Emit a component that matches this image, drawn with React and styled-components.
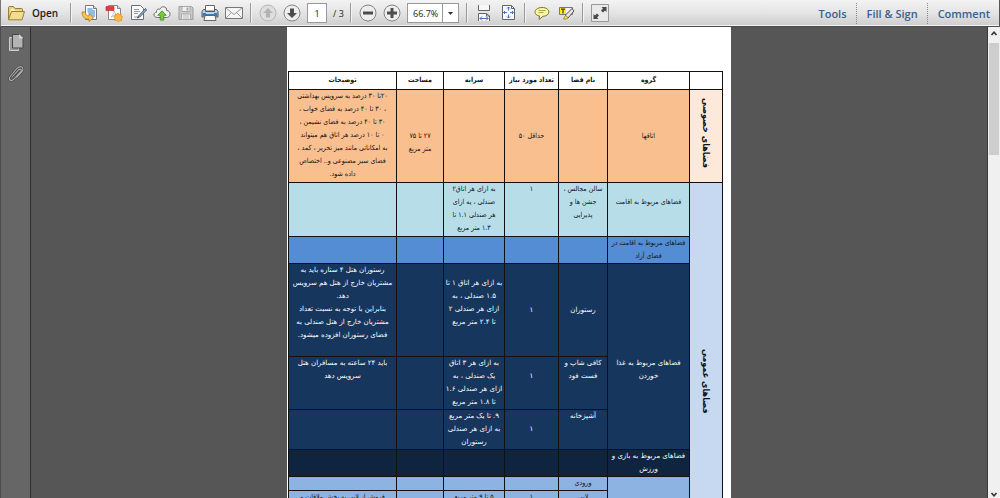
import React from "react";
import styled, { createGlobalStyle, css } from "styled-components";

const Global = createGlobalStyle`
  *, *::before, *::after { box-sizing: border-box; }
  body { margin: 0; overflow: hidden; font-family: "Open Sans", "Noto Sans", sans-serif; }
  button, input, select { font: inherit; color: inherit; }
`;

const Window = styled.div`
  display: flex;
  flex-direction: column;
  height: 100vh;
  background: #555;
`;

const Toolbar = styled.header`
  display: flex;
  align-items: center;
  flex: none;
  height: 27px;
  padding-left: 6px;
  border-left: 1px solid #777;
  border-right: 1px solid #555;
  border-bottom: 1px solid #4a4a4a;
  background: linear-gradient(#f3f3f3, #e4e4e4 50%, #cdcdcd);
  box-shadow: inset 0 -1px #f5f5f5;
`;

const Group = styled.div`
  display: flex;
  align-items: center;
  gap: 6px;
`;

const Separator = styled.span`
  width: 2px;
  height: 20px;
  margin: 0 ${(p) => (p.$wide ? 9 : 7)}px;
  border-left: 1px solid #999;
  border-right: 1px solid #f4f4f4;
`;

const IconButton = styled.button`
  display: flex;
  width: 18px;
  height: 18px;
  padding: 0;
  border: 0;
  background: none;
  svg { display: block; }
`;

const OpenButton = styled.button`
  display: flex;
  align-items: center;
  gap: 7px;
  width: 54px;
  padding: 0;
  border: 0;
  background: none;
  font-size: 10px;
  font-weight: 600;
  line-height: 18px;
  color: #1c1c1c;
  svg { flex: none; }
`;

const PageInput = styled.input`
  width: 20px;
  height: 20px;
  padding: 0;
  border: 1px solid #999;
  background: #fff;
  text-align: center;
  font-size: 9px;
  color: #222;
`;

const PageCount = styled.span`
  width: 10px;
  font-size: 9px;
  white-space: nowrap;
  color: #222;
`;

const ZoomBox = styled.label`
  position: relative;
  display: flex;
  width: 52px;
  height: 20px;
  svg { position: absolute; top: 0; right: 0; pointer-events: none; }
`;

const ZoomSelect = styled.select`
  appearance: none;
  width: 100%;
  padding: 0 18px 0 5px;
  border: 1px solid #999;
  border-radius: 0;
  background: #fff;
  font-size: 9px;
  color: #222;
`;

const Panes = styled.nav`
  display: flex;
  align-items: center;
  margin-left: auto;
`;

const PaneButton = styled.button`
  height: 21px;
  padding: 0 9px 0 10px;
  border: 0;
  border-left: ${(p) => (p.$first ? "0" : "1px dotted #888")};
  background: none;
  font-size: 11px;
  font-weight: 600;
  color: #38618f;
`;

const Workspace = styled.div`
  display: flex;
  flex: 1;
  min-height: 0;
`;

const SideRail = styled.aside`
  display: flex;
  flex-direction: column;
  align-items: center;
  gap: 13px;
  flex: none;
  width: 31px;
  padding-top: 6px;
  border-left: 1px solid #4c4c4c;
  border-right: 1px solid #2e2e2e;
  background: #666;
`;

const Viewport = styled.main`
  display: flex;
  justify-content: center;
  flex: 1;
  min-width: 0;
  overflow: hidden;
  background: #565656;
`;

const Sheet = styled.article`
  flex: none;
  align-self: flex-start;
  padding: 44px 8px 40px 1px;
  background: #fff;
`;

const ScrollTrack = styled.div`
  display: flex;
  flex-direction: column;
  align-items: center;
  flex: none;
  width: 13px;
  padding: 3px 0 0;
  border-left: 1px solid #3a3a3a;
  background: #f0f0f0;
`;

const ScrollThumb = styled.div`
  width: 10px;
  height: 112px;
  margin: 6px 0 auto;
  background: #cdcdcd;
`;

const Table = styled.table`
  border-collapse: collapse;
  table-layout: fixed;
  width: 434px;
  direction: rtl;
  font-family: "DejaVu Sans Condensed", "DejaVu Sans", sans-serif;
  font-size: 7px;
  line-height: 13px;
  color: #111;
`;

const Col = styled.col`
  width: ${(p) => p.$w}px;
`;

const tones = {
  peach: css`background: #fabf8f;`,
  cream: css`background: #fde9d9;`,
  aqua: css`background: #b7dee8;`,
  blue: css`background: #548dd4;`,
  navy: css`background: #17365d; color: #fff; font-family: "DejaVu Sans", sans-serif;`,
  ink: css`background: #0f243e; color: #fff; font-family: "DejaVu Sans", sans-serif;`,
  sky: css`background: #8db3e2;`,
  ice: css`background: #c6d9f1;`,
};

const Row = styled.tr`
  height: ${(p) => p.$h}px;
  ${(p) => tones[p.$tone]}
`;

const Head = styled.th`
  padding: 0;
  border: 1px solid #111;
  font-weight: 700;
  color: #111;
  white-space: nowrap;
`;

const Cell = styled.td`
  padding: 0;
  border: 1px solid #111;
  text-align: center;
  vertical-align: ${(p) => (p.$top ? "top" : "middle")};
  white-space: pre;
`;

const SideHead = styled.th`
  padding: 0;
  border: 1px solid #111;
  color: #111;
  ${(p) => tones[p.$tone]}
`;

const Vertical = styled.span`
  display: inline-block;
  writing-mode: vertical-rl;
  font-size: 9px;
  line-height: 16px;
  white-space: nowrap;
`;

const Svg = ({ children, w = 18, h = 18 }) => (
  <svg width={w} height={h} viewBox={`0 0 ${w} ${h}`} fill="none" aria-hidden="true">
    {children}
  </svg>
);

const FolderIcon = () => (
  <Svg>
    <path d="M1.5 15.5V3.5q0-1 1-1h4l1.5 2h6.5q1 0 1 1v2" fill="#e5cd7b" stroke="#9b7e35" />
    <path d="M4 4.5h3l1 2h6.5v3H3z" fill="#f7eeb8" />
    <path d="M1.5 15.8L4.5 7.5h13l-2.5 8.3z" fill="#f3dc8e" stroke="#9b7e35" />
  </Svg>
);
const ExportIcon = () => (
  <Svg>
    <path d="M4.5 1.5h8l3 3v11h-11z" fill="#fbfcff" stroke="#777" />
    <path d="M6.500 4h5v2h2.500v7H8V10L6.500 8z" fill="#8fbce9" />
    <path d="M12.500 1.500v3h3" stroke="#777" fill="#e8e8e8" />
    <path d="M1 8h3.500q-.5 4 3.500 4V9.500l4.500 4.300L8 17.500V15Q1 15.500 1 8z" fill="#ffc64d" stroke="#b97c1c" strokeWidth=".8" />
  </Svg>
);
const CreateIcon = () => (
  <Svg>
    <path d="M3.500 1.500h9l3 3v11h-12z" fill="#fff" stroke="#888" />
    <path d="M12.500 1.500v3h3" stroke="#888" fill="#ddd" />
    <path d="M6 13c2-2 3-4 3-6 1 3 3 4 5 4-3-.5-5 .5-8 2z" stroke="#b5b5b5" strokeWidth=".8" />
    <path d="M1 2.500h8v4H1z" fill="#e63a3f" stroke="#b71f2a" strokeWidth=".6" />
    <path d="M13 9l1.200 1.500 1.900-.5v2l1.700 1-1.400 1.400.3 2-2 .1-1.500 1.300-1.500-1.300-2-.1.300-2L8.600 13l1.700-1v-2l1.700.5z" fill="#f9b942" stroke="#d98d1e" strokeWidth=".7" />
  </Svg>
);
const EditIcon = () => (
  <Svg>
    <path d="M2.500 1.500h9l3 3v11h-12z" fill="#f8f8f8" stroke="#707070" />
    <path d="M5 5.500h5M5 7.500h6M5 9.500h4M5 13h4" stroke="#999" />
    <path d="M16.500 4.500L9.500 12 8.500 14l2.200-1L17.500 6z" fill="#9fc0df" stroke="#34495e" strokeWidth=".9" />
  </Svg>
);
const CloudIcon = () => (
  <Svg>
    <path d="M4.500 13.500C0 13.500 0 8.500 3.500 8.300 3 5 6 4.500 6.800 5.500 8 1.500 14 2 13.700 6.500c4.300 0 4.600 7-.2 7z" fill="#f2f2f2" stroke="#6b6b6b" />
    <path d="M9 6.800l4.300 4.500h-2.500v4.800H7.200v-4.800H4.700z" fill="#79cb3c" stroke="#3d8c1d" strokeWidth=".8" />
  </Svg>
);
const SaveIcon = () => (
  <Svg>
    <path d="M2 2.500h12.500l1.500 1.500v11.500H2z" fill="#c9c9c9" stroke="#9b9b9b" />
    <path d="M5 2.500h8v5H5z" fill="#f0f0f0" stroke="#aaa" />
    <path d="M9.500 3.500h2v3h-2z" fill="#aaa" />
    <path d="M4.500 10h9v5.500h-9z" fill="#ededed" stroke="#aaa" />
    <path d="M6 12h6M6 14h6" stroke="#bbb" />
  </Svg>
);
const PrintIcon = () => (
  <Svg>
    <path d="M4.500 7V1.500h9V7z" fill="#fff" stroke="#666" />
    <path d="M2.500 5.500h2v2h9v-2h2l1.500 2v5.500H1V7.500z" fill="#c0d2e2" stroke="#4c5864" />
    <path d="M1.500 9h15v3.500h-15z" fill="#3f79ae" />
    <path d="M4 11.500h10l1 5H3z" fill="#fafafa" stroke="#666" />
    <path d="M5 9.500h8" stroke="#b9d8f3" />
  </Svg>
);
const MailIcon = () => (
  <Svg>
    <path d="M.5 3.500h17v11H.5z" fill="#f5f5f5" stroke="#777" />
    <path d="M1 4l8 6.500L17 4M1 14l5.500-5.500M17 14l-5.500-5.500" stroke="#999" />
  </Svg>
);
const Disc = ({ children, dim }) => (
  <Svg>
    <circle cx="9" cy="9" r="8" fill={dim ? "#dedede" : "#eee"} stroke={dim ? "#b5b5b5" : "#858585"} />
    <g fill={dim ? "#b2b2b2" : "#4d4d4d"}>{children}</g>
  </Svg>
);
const UpIcon = () => <Disc dim><path d="M9 4l5 5h-3v4.500H7V9H4z" /></Disc>;
const DownIcon = () => <Disc><path d="M9 14l5-5h-3V4.500H7V9H4z" /></Disc>;
const MinusIcon = () => <Disc><path d="M4 7.500h10v3H4z" /></Disc>;
const PlusIcon = () => <Disc><path d="M4 7.500h3.500V4h3v3.500H14v3h-3.500V14h-3v-3.500H4z" /></Disc>;
const FitWidthIcon = () => (
  <Svg>
    <path d="M3.500 1v5.500h11V1" fill="#f8f8f8" stroke="#666" />
    <path d="M3.500 17v-7.500h8l3 2.500v5" fill="#f8f8f8" stroke="#666" />
    <path d="M11.500 9.500V12h3" stroke="#666" />
    <path d="M5 14.500h8M7 12.500l-2 2 2 2M11 12.500l2 2-2 2" stroke="#3e62b3" strokeWidth=".9" />
  </Svg>
);
const FitPageIcon = () => (
  <Svg>
    <path d="M3.500 1.500h9l3 3v11h-12z" fill="#f7f9fc" stroke="#666" />
    <path d="M12.500 1.500v3h3" stroke="#666" />
    <path d="M9.500 3v3.500M9.500 10.500V14M4.500 8.500H8M11 8.500h3.500M8 4.500L9.500 3 11 4.500M8 12.500L9.500 14l1.500-1.500M6 7L4.500 8.500 6 10M13 7l1.500 1.500L13 10" stroke="#3e62b3" strokeWidth=".9" />
  </Svg>
);
const NoteIcon = () => (
  <Svg>
    <path d="M9 3.500c9 0 9 8.500 1 8.800L6 15.500l.5-3.500C-.5 11 1 3.500 9 3.500z" fill="#fbf7a0" stroke="#77743a" />
    <path d="M5.500 6.500h7M5.500 8.500h5" stroke="#aaa555" />
  </Svg>
);
const HighlightIcon = () => (
  <Svg>
    <path d="M2.500 3.500h13v7h-13z" fill="#f5f5f5" stroke="#777" />
    <path d="M3 4h6v6H3z" fill="#ffec21" />
    <path d="M4 5.200h4M6 5v4.500" stroke="#403c10" strokeWidth="1.200" />
    <path d="M15 4.500L8.500 11v2.500l2.500.5 6-7z" fill="#e3e3e3" stroke="#555" />
    <path d="M8.500 11.500L6.500 15h3l1.500-1.500z" fill="#ffec21" stroke="#827718" strokeWidth=".7" />
  </Svg>
);
const FullscreenIcon = () => (
  <Svg>
    <path d="M.5.500h17v17H.5z" fill="#e9e9e9" stroke="#999" />
    <path d="M10.500 3H15.500v5l-1.500-1.500-2 2-2-2 2-2zM2.500 10l1.500 1.500 2-2 2 2-2 2L7.500 15h-5z" fill="#484848" />
  </Svg>
);
const PagesIcon = () => (
  <Svg w={18} h={20}>
    <path d="M2.500 4.500h9v13h-9z" fill="#999" stroke="#cdcdcd" />
    <path d="M5.500 1.500h7l3.500 3.500v10H5.500z" fill="#b3b3b3" stroke="#444" />
    <path d="M12.500 1.500V5H16" fill="#ddd" stroke="#ddd" strokeWidth=".7" />
  </Svg>
);
const ClipIcon = () => (
  <Svg w={18} h={20}>
    <path d="M5 13l6.500-7q1.500-1.500 2.500-.5t-.5 2.500L7 15q-2.500 2.500-4 1t.5-4L10 4.500Q13 1.500 15 3.200t-.5 5L9.500 13.500" stroke="#3d3d3d" strokeWidth="2.200" />
    <path d="M5 13l6.500-7q1.500-1.500 2.500-.5t-.5 2.500L7 15q-2.500 2.500-4 1t.5-4L10 4.500Q13 1.500 15 3.200t-.5 5L9.500 13.500" stroke="#b0b0b0" strokeWidth="1.100" />
  </Svg>
);
const SelectArrow = () => (
  <Svg w={17} h={20}>
    <path d="M.5 1v18" stroke="#999" />
    <path d="M6 9h5l-2.500 3z" fill="#333" />
  </Svg>
);
const Chevron = ({ down }) => (
  <Svg w={8} h={7}>
    <path d={down ? "M1.500 2L4 4.800 6.500 2" : "M1.500 5L4 2.200 6.500 5"} stroke="#333" strokeWidth="1.600" />
  </Svg>
);

const fileTools = [
  ["Export", ExportIcon],
  ["Create PDF", CreateIcon],
  ["Edit", EditIcon],
  ["Upload", CloudIcon],
  ["Save", SaveIcon],
  ["Print", PrintIcon],
  ["Email", MailIcon],
];

const Tools = ({ items }) =>
  items.map(([label, Icon]) => (
    <IconButton key={label} type="button" aria-label={label}>
      <Icon />
    </IconButton>
  ));

export default function App() {
  return (
    <Window>
      <Global />
      <Toolbar>
        <OpenButton type="button"><FolderIcon />Open</OpenButton>
        <Separator $wide />
        <Group><Tools items={fileTools} /></Group>
        <Separator />
        <Group>
          <Tools items={[["Previous page", UpIcon], ["Next page", DownIcon]]} />
          <PageInput aria-label="Page" defaultValue="1" />
          <PageCount>/ 3</PageCount>
        </Group>
        <Separator />
        <Group>
          <Tools items={[["Zoom out", MinusIcon], ["Zoom in", PlusIcon]]} />
          <ZoomBox>
            <ZoomSelect aria-label="Zoom" defaultValue="66.7%">
              <option>66.7%</option>
            </ZoomSelect>
            <SelectArrow />
          </ZoomBox>
        </Group>
        <Separator />
        <Group><Tools items={[["Fit width", FitWidthIcon], ["Fit page", FitPageIcon]]} /></Group>
        <Separator />
        <Group><Tools items={[["Add note", NoteIcon], ["Highlight", HighlightIcon]]} /></Group>
        <Separator />
        <Tools items={[["Full screen", FullscreenIcon]]} />
        <Panes>
          <PaneButton type="button" $first>Tools</PaneButton>
          <PaneButton type="button">Fill &amp; Sign</PaneButton>
          <PaneButton type="button">Comment</PaneButton>
        </Panes>
      </Toolbar>
      <Workspace>
        <SideRail>
          <IconButton type="button" aria-label="Pages"><PagesIcon /></IconButton>
          <IconButton type="button" aria-label="Attachments"><ClipIcon /></IconButton>
        </SideRail>
        <Viewport>
          <Sheet lang="fa">
            <Table>
              <colgroup>
                <Col $w={33} /><Col $w={82} /><Col $w={49} /><Col $w={54} />
                <Col $w={61} /><Col $w={47} /><Col $w={108} />
              </colgroup>
              <thead>
                <Row $h={18}>
                  <Head />
                  <Head>گروه</Head>
                  <Head>نام فضا</Head>
                  <Head>تعداد مورد نیاز</Head>
                  <Head>سرانه</Head>
                  <Head>مساحت</Head>
                  <Head>توضیحات</Head>
                </Row>
              </thead>
              <tbody>
                <Row $h={93} $tone="peach">
                  <SideHead scope="rowgroup" $tone="cream"><Vertical>فضاهای خصوصی</Vertical></SideHead>
                  <Cell>اتاقها</Cell>
                  <Cell />
                  <Cell>حداقل ۵۰</Cell>
                  <Cell />
                  <Cell>{"\n۲۷ تا ۷۵\nمتر مربع"}</Cell>
                  <Cell $top>{"۲۰تا ۳۰ درصد به سرویس بهداشتی\n، ۳۰ تا ۴۰ درصد به فضای خواب ،\n۳۰ تا ۴۰ درصد به فضای نشیمن ،\n۰ تا ۱۰ درصد هر اتاق هم میتواند\nبه امکاناتی مانند میز تحریر ، کمد ،\nفضای سبز مصنوعی و.. اختصاص\nداده شود."}</Cell>
                </Row>
                <Row $h={54} $tone="aqua">
                  <SideHead scope="rowgroup" rowSpan={8} $tone="ice"><Vertical>فضاهای عمومی</Vertical></SideHead>
                  <Cell $top>{"\nفضاهای مربوط به اقامت"}</Cell>
                  <Cell $top>{"سالن مجالس ،\nجشن ها و\nپذیرایی"}</Cell>
                  <Cell $top>۱</Cell>
                  <Cell $top>{"به ازای هر اتاق۲\nصندلی ، یه ازای\nهر صندلی ۱.۱ تا\n۱.۳ متر مربع"}</Cell>
                  <Cell />
                  <Cell />
                </Row>
                <Row $h={27} $tone="blue">
                  <Cell>{"فضاهای مربوط به اقامت در\nفضای آزاد"}</Cell>
                  <Cell /><Cell /><Cell /><Cell /><Cell />
                </Row>
                <Row $h={93} $tone="navy">
                  <Cell rowSpan={3}>{"\n\nفضاهای مربوط به غذا\nخوردن"}</Cell>
                  <Cell>رستوران</Cell>
                  <Cell>۱</Cell>
                  <Cell $top>{"\nبه ازای هر اتاق ۱ تا\n۱.۵ صندلی ، به\nازای هر صندلی ۲\nتا ۲.۴ متر مربع"}</Cell>
                  <Cell />
                  <Cell $top>{"رستوران هتل ۴ ستاره باید به\nمشتریان خارج از هتل هم سرویس\nدهد.\nبنابراین با توجه به نسبت تعداد\nمشتریان خارج از هتل صندلی به\nفضای رستوران افزوده میشود."}</Cell>
                </Row>
                <Row $h={53} $tone="navy">
                  <Cell $top>{"کافی شاپ و\nفست فود"}</Cell>
                  <Cell $top>{"\n۱"}</Cell>
                  <Cell $top>{"به ازای هر ۳ اتاق\nیک صندلی ، به\nازای هر صندلی ۱.۶\nتا ۱.۸ متر مربع"}</Cell>
                  <Cell />
                  <Cell $top>{"باید ۲۴ ساعته به مسافران هتل\nسرویس دهد"}</Cell>
                </Row>
                <Row $h={40} $tone="navy">
                  <Cell $top>آشپزخانه</Cell>
                  <Cell $top>{"\n۱"}</Cell>
                  <Cell $top>{"۹. تا یک متر مربع\nبه ازای هر صندلی\nرستوران"}</Cell>
                  <Cell />
                  <Cell />
                </Row>
                <Row $h={27} $tone="ink">
                  <Cell>{"فضاهای مربوط به بازی و\nورزش"}</Cell>
                  <Cell /><Cell /><Cell /><Cell /><Cell />
                </Row>
                <Row $h={14} $tone="sky">
                  <Cell rowSpan={2} />
                  <Cell>ورودی</Cell>
                  <Cell /><Cell /><Cell /><Cell />
                </Row>
                <Row $h={94} $tone="sky">
                  <Cell $top>لابی</Cell>
                  <Cell $top>۱</Cell>
                  <Cell $top>۵ تا ۹ متر مربع</Cell>
                  <Cell />
                  <Cell $top>فروش از لابی به بخش ملاقات و</Cell>
                </Row>
              </tbody>
            </Table>
          </Sheet>
        </Viewport>
        <ScrollTrack>
          <Chevron />
          <ScrollThumb />
          <Chevron down />
        </ScrollTrack>
      </Workspace>
    </Window>
  );
}
